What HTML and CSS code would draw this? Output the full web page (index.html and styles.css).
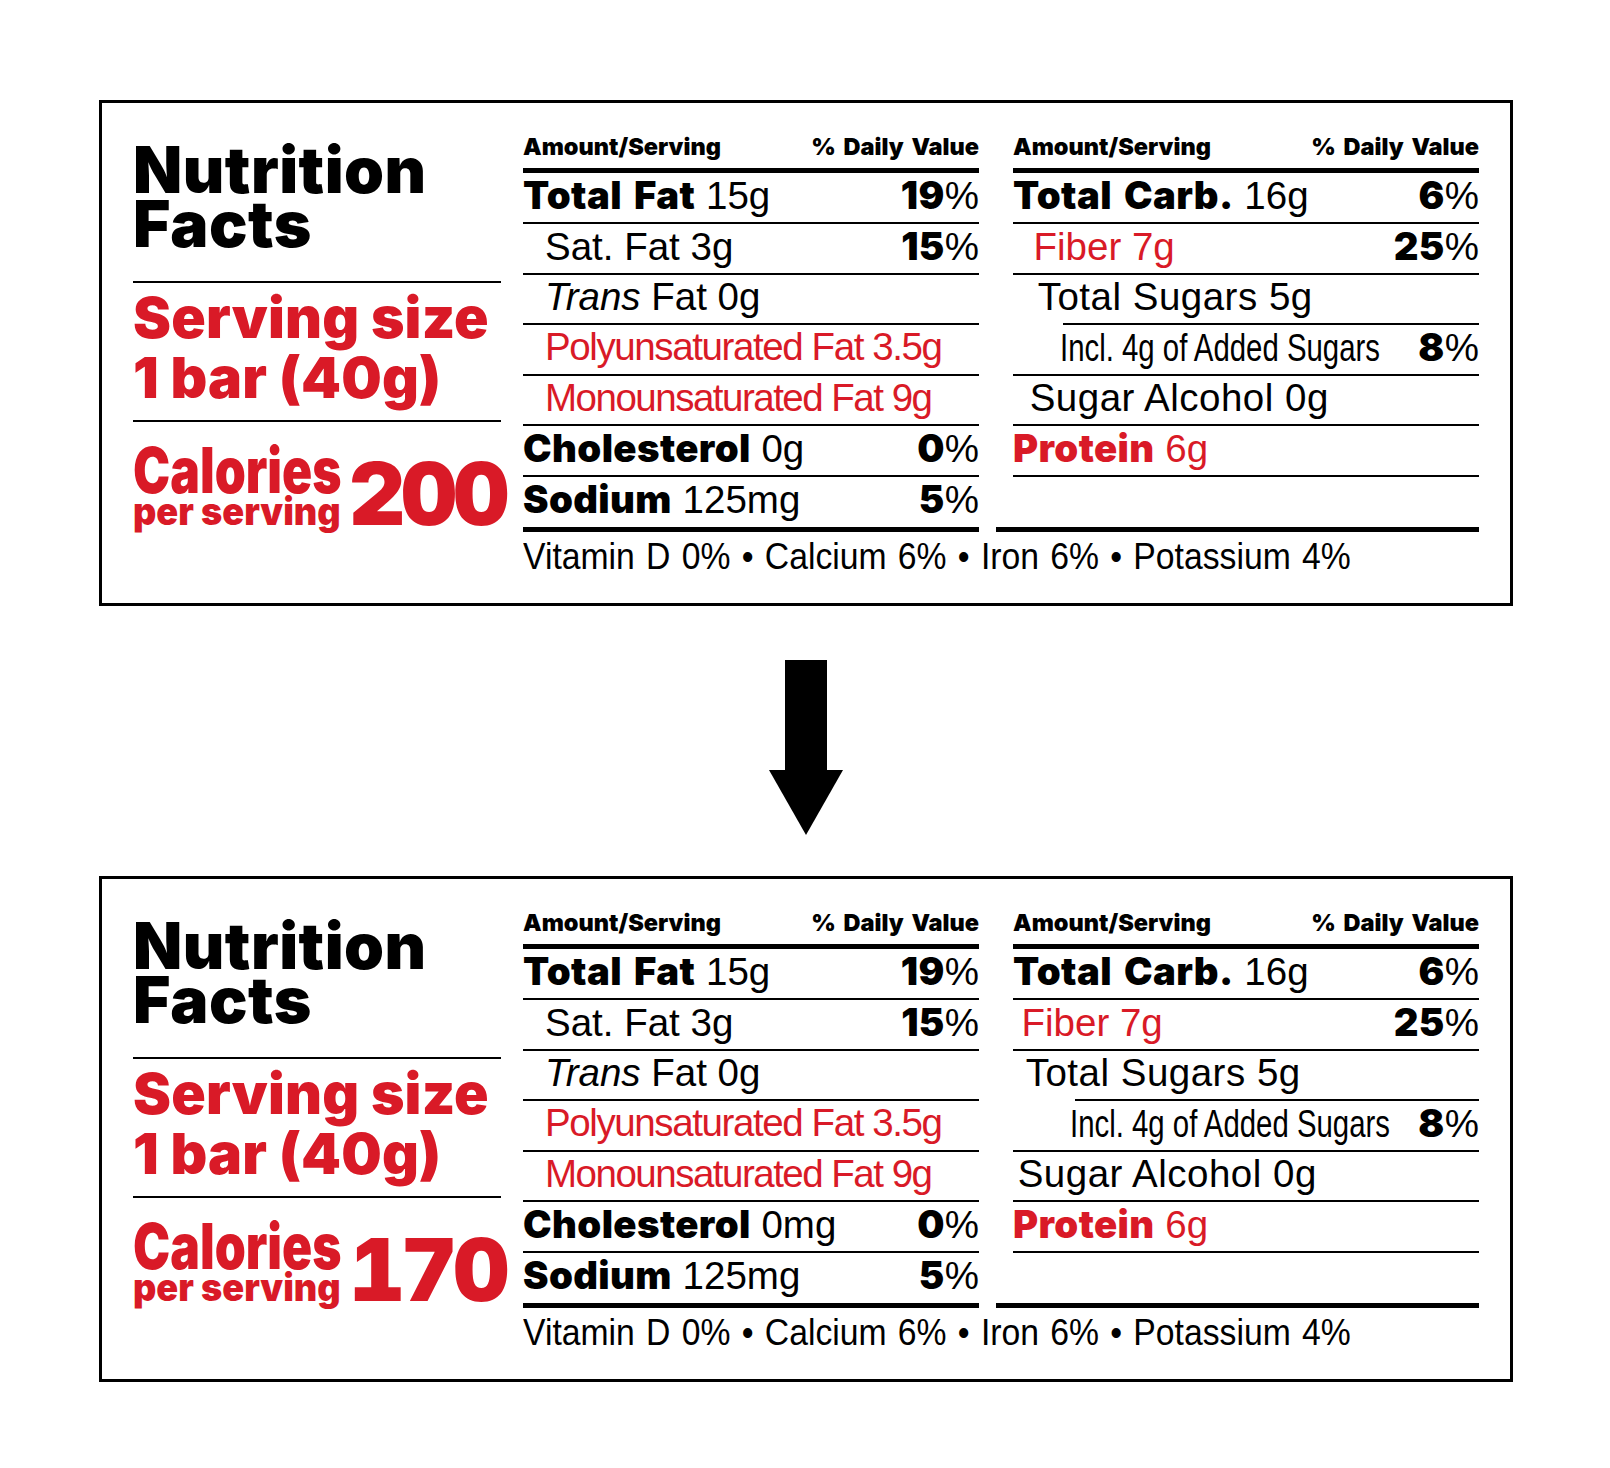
FILE: index.html
```html
<!DOCTYPE html>
<html lang="en">
<head>
<meta charset="utf-8">
<title>Nutrition Facts</title>
<link rel="stylesheet" href="styles.css">
</head>
<body>
<div class="page">
  <section class="label">
    <div class="left">
      <h1 class="title">Nutrition<br>Facts</h1>
      <div class="rule r1"></div>
      <div class="serving">Serving size<br>1 bar (40g)</div>
      <div class="rule r2"></div>
      <div class="cal">
        <div class="cal-words"><span class="cal-big">Calories</span><span class="cal-small">per serving</span></div>
        <div class="cal-num">200</div>
      </div>
    </div>
    <div class="facts">
      <div class="cols">
        <div class="col mid">
          <div class="hdr"><span>Amount/Serving</span><span class="dv">% Daily Value</span></div>
          <div class="row first"><span><span class="b">Total Fat</span> 15g</span><span class="pct"><span class="b">19</span>%</span></div>
          <div class="row ind"><span>Sat. Fat 3g</span><span class="pct"><span class="b">15</span>%</span></div>
          <div class="row ind"><span><i>Trans</i> Fat 0g</span></div>
          <div class="row ind red poly"><span>Polyunsaturated Fat 3.5g</span></div>
          <div class="row ind red mono"><span>Monounsaturated Fat 9g</span></div>
          <div class="row"><span><span class="b">Cholesterol</span> 0g</span><span class="pct"><span class="b">0</span>%</span></div>
          <div class="row nob"><span><span class="b">Sodium</span> 125mg</span><span class="pct"><span class="b">5</span>%</span></div>
          <div class="thick"></div>
        </div>
        <div class="col right">
          <div class="hdr"><span>Amount/Serving</span><span class="dv">% Daily Value</span></div>
          <div class="row first"><span><span class="b">Total Carb.</span> 16g</span><span class="pct"><span class="b">6</span>%</span></div>
          <div class="row fib"><span class="red">Fiber 7g</span><span class="pct"><span class="b">25</span>%</span></div>
          <div class="row ts nob loose"><span>Total Sugars 5g</span></div>
          <div class="part-rule"></div>
          <div class="row incl-row"><span class="incl">Incl. 4g of Added Sugars</span><span class="pct"><span class="b">8</span>%</span></div>
          <div class="row sa loose"><span>Sugar Alcohol 0g</span></div>
          <div class="row red"><span><span class="b">Protein</span> 6g</span></div>
          <div class="row nob"></div>
          <div class="thick ext"></div>
        </div>
      </div>
      <div class="vit"><span>Vitamin D 0% • Calcium 6% • Iron 6% • Potassium 4%</span></div>
    </div>
  </section>

  <div class="arrow">
    <svg width="74" height="175" viewBox="0 0 74 175" aria-hidden="true">
      <rect x="16" y="0" width="42" height="111" fill="#000"/>
      <polygon points="0,110 74,110 37,175" fill="#000"/>
    </svg>
  </div>

  <section class="label b2">
    <div class="left">
      <h1 class="title">Nutrition<br>Facts</h1>
      <div class="rule r1"></div>
      <div class="serving">Serving size<br>1 bar (40g)</div>
      <div class="rule r2"></div>
      <div class="cal">
        <div class="cal-words"><span class="cal-big">Calories</span><span class="cal-small">per serving</span></div>
        <div class="cal-num">170</div>
      </div>
    </div>
    <div class="facts">
      <div class="cols">
        <div class="col mid">
          <div class="hdr"><span>Amount/Serving</span><span class="dv">% Daily Value</span></div>
          <div class="row first"><span><span class="b">Total Fat</span> 15g</span><span class="pct"><span class="b">19</span>%</span></div>
          <div class="row ind"><span>Sat. Fat 3g</span><span class="pct"><span class="b">15</span>%</span></div>
          <div class="row ind"><span><i>Trans</i> Fat 0g</span></div>
          <div class="row ind red poly"><span>Polyunsaturated Fat 3.5g</span></div>
          <div class="row ind red mono"><span>Monounsaturated Fat 9g</span></div>
          <div class="row"><span><span class="b">Cholesterol</span> 0mg</span><span class="pct"><span class="b">0</span>%</span></div>
          <div class="row nob"><span><span class="b">Sodium</span> 125mg</span><span class="pct"><span class="b">5</span>%</span></div>
          <div class="thick"></div>
        </div>
        <div class="col right">
          <div class="hdr"><span>Amount/Serving</span><span class="dv">% Daily Value</span></div>
          <div class="row first"><span><span class="b">Total Carb.</span> 16g</span><span class="pct"><span class="b">6</span>%</span></div>
          <div class="row fib"><span class="red">Fiber 7g</span><span class="pct"><span class="b">25</span>%</span></div>
          <div class="row ts nob loose"><span>Total Sugars 5g</span></div>
          <div class="part-rule"></div>
          <div class="row incl-row"><span class="incl">Incl. 4g of Added Sugars</span><span class="pct"><span class="b">8</span>%</span></div>
          <div class="row sa loose"><span>Sugar Alcohol 0g</span></div>
          <div class="row red"><span><span class="b">Protein</span> 6g</span></div>
          <div class="row nob"></div>
          <div class="thick ext"></div>
        </div>
      </div>
      <div class="vit"><span>Vitamin D 0% • Calcium 6% • Iron 6% • Potassium 4%</span></div>
    </div>
  </section>
</div>
</body>
</html>
```

FILE: styles.css
```css
* { box-sizing: border-box; margin: 0; padding: 0; }
html, body { background: #fff; }
body {
  width: 1610px;
  min-height: 1468px;
  font-family: "Liberation Sans", Arial, sans-serif;
  color: #000;
}
.page { padding: 100px 0 0 99px; }

.label {
  width: 1414px;
  height: 506px;
  border: 3px solid #000;
  display: flex;
  padding: 0 31px;
}

.red { color: #d91a27; }

/* left column */
.left { width: 368px; flex: none; }
.title {
  font: 900 64px/54px Inter, "Liberation Sans", sans-serif;
  margin-top: 40px;
  letter-spacing: 0.5px;
}
.rule { border-top: 2px solid #000; }
.r1 { margin-top: 30px; }
.serving {
  color: #d91a27;
  font: 900 57px/60px Inter, "Liberation Sans", sans-serif;
  letter-spacing: 0.2px;
  margin-top: 5px;
  white-space: nowrap;
}
.r2 { margin-top: 12px; }
.cal {
  display: flex;
  align-items: flex-end;
  margin-top: 24px;
  color: #d91a27;
}
.cal-words { width: 216px; flex: none; }
.cal-big {
  display: block;
  font: 900 63px/48px Inter, "Liberation Sans", sans-serif;
  white-space: nowrap;
  transform: scaleX(0.79);
  transform-origin: left center;
}
.cal-small {
  display: block;
  font: 900 38px/35px Inter, "Liberation Sans", sans-serif;
  white-space: nowrap;
  transform: scaleX(0.95);
  transform-origin: left center;
}
.cal-num {
  font: 900 87px/70px Inter, "Liberation Sans", sans-serif;
  font-variant-numeric: tabular-nums;
  letter-spacing: -4px;
  white-space: nowrap;
}

/* facts */
.facts { width: 956px; margin-left: 22px; flex: none; }
.cols { display: flex; }
.col { display: flex; flex-direction: column; }
.mid { width: 456px; }
.right { width: 466px; margin-left: 34px; }

.hdr {
  height: 70px;
  border-bottom: 5px solid #000;
  display: flex;
  justify-content: space-between;
  align-items: flex-end;
  padding-bottom: 8px;
  font: 900 23.5px/26px Inter, "Liberation Sans", sans-serif;
  white-space: nowrap;
}
.dv { word-spacing: 3px; }

.row {
  height: 50.5px;
  border-bottom: 2px solid #000;
  display: flex;
  justify-content: space-between;
  align-items: baseline;
  padding-top: 3px;
  font-size: 38.5px;
  line-height: 38px;
  white-space: nowrap;
}
.row.first { height: 51px; }
.row.nob { border-bottom: 0; }
.b {
  font-family: Inter, "Liberation Sans", sans-serif;
  font-weight: 900;
  font-size: 38.3px;
  letter-spacing: 0.4px;
  word-spacing: 4px;
}
.ind { padding-left: 22px; }
.poly { letter-spacing: -1.4px; }
.mono { letter-spacing: -1.5px; }
.loose { letter-spacing: 0.5px; }

.fib { padding-left: 20.5px; }
.ts { padding-left: 24.7px; height: 48.5px; }
.part-rule { height: 2px; background: #000; margin-left: 49.5px; }
.incl-row { padding-left: 47px; }
.incl {
  display: inline-block;
  flex: 1 1 auto;
  width: 0;
  min-width: 0;
  font-size: 39px;
  transform: scaleX(0.753);
  transform-origin: left center;
}
.sa { padding-left: 16.7px; }

.b2 .fib { padding-left: 8.5px; }
.b2 .ts { padding-left: 12.7px; }
.b2 .part-rule { margin-left: 61.5px; }
.b2 .incl-row { padding-left: 57px; }
.b2 .sa { padding-left: 4.7px; }

.thick { height: 5px; background: #000; }
.thick.ext { margin-left: -17px; }

.vit {
  margin-top: 7px;
  font-size: 36px;
  line-height: 36px;
  white-space: nowrap;
}
.vit span {
  display: inline-block;
  transform: scaleX(0.937);
  transform-origin: left center;
  word-spacing: 2px;
}

/* arrow */
.arrow {
  height: 270px;
  width: 1414px;
  display: flex;
  justify-content: center;
  padding-top: 54px;
}
.arrow svg { display: block; }
```
